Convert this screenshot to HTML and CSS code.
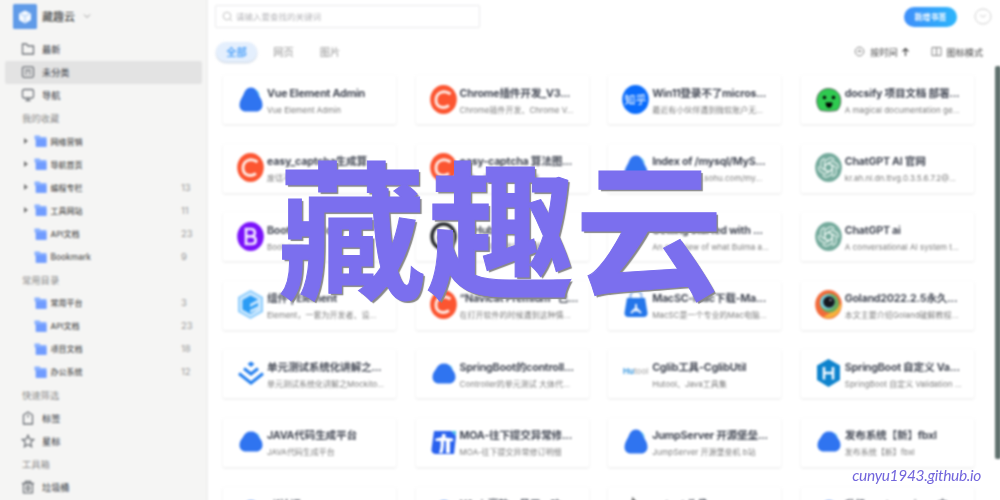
FILE: index.html
```html
<!DOCTYPE html>
<html lang="zh-CN">
<head>
<meta charset="utf-8">
<title>藏趣云</title>
<link rel="stylesheet" href="styles.css">
</head>
<body>
<svg class="defs" width="0" height="0">
  <symbol id="folder" viewBox="0 0 13 12"><path d="M.5 .5h5l1.200 1.600h5.800v9.700H1.600V5L.5 4z" fill="#8ab1ff"/><path d="M2 4.200h10.500v7.600H2z" fill="#709cff"/></symbol>
  <symbol id="drop" viewBox="0 0 28 30"><path d="M14 2.500c4 0 6 3 7.500 7 2 4 4 6 4 10.500 0 4-3 6.500-6 6.500H9c-4 0-6.500-2.500-6.500-6.500 0-4 2-6.500 4-10.500 1.500-4 3.500-7 7.500-7z" fill="#2f74f0"/><path d="M18.500 4.500c3 1 4 4 4.500 7z" fill="#5ac8f5"/></symbol>
  <symbol id="flat" viewBox="0 0 28 30"><path d="M14 4.500c4 0 6.500 2 8 5.500 2 3 3.500 4.500 3.500 8 0 4-3 6.500-6 6.500H9c-4 0-6.500-2.500-6.500-6.500 0-3.500 1.500-5 3.500-8 1.500-3.500 4-5.500 8-5.500z" fill="#2f74f0"/><path d="M19 5.500c2.500 1 3.500 3 4 5.500z" fill="#5ac8f5"/></symbol>
  <symbol id="csdn" viewBox="0 0 28 30"><ellipse cx="13.500" cy="14.500" rx="13.300" ry="14.500" fill="#fc5531"/><path d="M20.500 9C13.500 4 6 8 6 15c0 7 7 9.500 13 5.500" fill="none" stroke="#ffe9e2" stroke-width="2.900"/></symbol>
  <symbol id="gpt" viewBox="0 0 28 30"><ellipse cx="13.500" cy="14.500" rx="13.300" ry="14.500" fill="#74aa9c"/><g fill="none" stroke="#e5f3ee" stroke-width="1.200" transform="translate(-.5 -.5)"><path d="M14 11l4 2.300v8l-4 2.500c-2.500 1.500-5 .5-5.800-1.500"/><path d="M14 11l4 2.300v8l-4 2.500c-2.500 1.500-5 .5-5.800-1.500" transform="rotate(60 14 15)"/><path d="M14 11l4 2.300v8l-4 2.500c-2.500 1.500-5 .5-5.800-1.500" transform="rotate(120 14 15)"/><path d="M14 11l4 2.300v8l-4 2.500c-2.500 1.500-5 .5-5.800-1.500" transform="rotate(180 14 15)"/><path d="M14 11l4 2.300v8l-4 2.500c-2.500 1.500-5 .5-5.800-1.500" transform="rotate(240 14 15)"/><path d="M14 11l4 2.300v8l-4 2.500c-2.500 1.500-5 .5-5.800-1.500" transform="rotate(300 14 15)"/></g></symbol>
</svg>

<div class="app">
  <aside class="side">
    <header class="brand">
      <svg class="logo" viewBox="0 0 24 25"><rect width="24" height="25" rx="1.500" fill="#609be8"/><path d="M12 6.500l6 3v6.500L12 19.500 6 16V9.500z" fill="#f4f9ff"/><path d="M6.500 9.500l5.500 2.700 5.500-2.700M12 12.200V19" fill="none" stroke="#a9cbf6"/></svg>
      <span class="name">藏趣云</span>
      <svg class="chev" viewBox="0 0 8 6"><path d="M1 1.500l3 3 3-3" fill="none" stroke="#999"/></svg>
    </header>
    <div class="row main"><svg viewBox="0 0 14 14"><path d="M1.500 2h4l1.500 2h5.500v8h-11z"/></svg>最新</div>
    <div class="row main on"><svg viewBox="0 0 14 14"><rect x="1.500" y="1.800" width="11" height="10.500" rx="1.500"/><path d="M4 5.500h6M4 8.500h2M8 8.500h2"/></svg>未分类</div>
    <div class="row main"><svg viewBox="0 0 14 14"><rect x="1.500" y="1.500" width="11" height="8.500" rx="1.500"/><path d="M4.500 12.500h5M7 10v2"/></svg>导航</div>
    <div class="row label">我的收藏</div>
    <div class="row sub"><i class="tri"></i><svg><use href="#folder"/></svg>网络营销</div>
    <div class="row sub"><i class="tri"></i><svg><use href="#folder"/></svg>导航首页</div>
    <div class="row sub"><i class="tri"></i><svg><use href="#folder"/></svg>编程专栏<b>13</b></div>
    <div class="row sub"><i class="tri"></i><svg><use href="#folder"/></svg>工具网站<b>11</b></div>
    <div class="row sub"><i></i><svg><use href="#folder"/></svg>API文档<b>23</b></div>
    <div class="row sub"><i></i><svg><use href="#folder"/></svg><span class="latin">Bookmark</span><b>9</b></div>
    <div class="row label">常用目录</div>
    <div class="row sub"><i></i><svg><use href="#folder"/></svg>常用平台<b>3</b></div>
    <div class="row sub"><i></i><svg><use href="#folder"/></svg>API文档<b>23</b></div>
    <div class="row sub"><i></i><svg><use href="#folder"/></svg>项目文档<b>18</b></div>
    <div class="row sub"><i></i><svg><use href="#folder"/></svg>办公系统<b>12</b></div>
    <div class="row label">快速筛选</div>
    <div class="row main"><svg viewBox="0 0 14 14"><path d="M2.500 4L7 1l4.500 3v9h-9zM7 3.500v3"/></svg>标签</div>
    <div class="row main"><svg viewBox="0 0 14 14"><path d="M7 1.300l1.700 3.800 4 .4-3 2.800.9 4.300L7 10.500l-3.600 2.100.9-4.300-3-2.800 4-.4z"/></svg>星标</div>
    <div class="row label">工具箱</div>
    <div class="row main"><svg viewBox="0 0 14 14"><path d="M1 3.500h12M4.500 3.500v-2h5v2M2.500 3.500v9.300h9V3.500M5.500 6.500v3.500h3V6.500z"/></svg>垃圾桶</div>
  </aside>

  <main class="content">
    <div class="top">
      <div class="search"><svg viewBox="0 0 11 11"><circle cx="5" cy="5" r="3.800"/><path d="M8 8l2 2"/></svg>请输入要查找的关键词</div>
      <div class="add">新增书签</div>
      <svg class="avatar" viewBox="0 0 18 17"><ellipse cx="9" cy="8.500" rx="8" ry="7.500"/><path d="M6 7l3 2 3-2"/></svg>
    </div>
    <div class="bar">
      <span class="tab active">全部</span><span class="tab">网页</span><span class="tab">图片</span>
      <div class="tools">
        <svg viewBox="0 0 11 11"><circle cx="5.500" cy="5.500" r="4.300"/><path d="M3.500 5.500h4M5.500 3.500v2"/></svg><span>按时间</span>
        <svg class="arrow" viewBox="0 0 9 10"><path d="M4.500 9V1.500M1.500 4.500l3-3 3 3"/></svg>
        <svg viewBox="0 0 11 11"><path d="M1 1.500h9v8H1zM5.500 1.500v8"/></svg><span>图标模式</span>
      </div>
    </div>
    <div class="grid">
      <div class="card"><svg><use href="#drop"/></svg><div><h3>Vue Element Admin</h3><p>Vue Element Admin</p></div></div>
      <div class="card"><svg><use href="#csdn"/></svg><div><h3>Chrome插件开发_V3...</h3><p>Chrome插件开发、Chrome V...</p></div></div>
      <div class="card"><svg viewBox="0 0 28 30"><ellipse cx="13.500" cy="14.500" rx="13.300" ry="14.500" fill="#0b6cfb"/><text x="13.500" y="19" class="zhi">知乎</text></svg><div><h3>Win11登录不了micros...</h3><p>最近有小伙伴遇到微软账户无...</p></div></div>
      <div class="card"><svg viewBox="0 0 28 30"><path d="M5 25C-1 18 1 4 13.500 3.500 26.500 4 28.500 18 22.500 25c-2 1.500-15.500 1.500-17.500 0z" fill="#2fca50" stroke="#54645a"/><circle cx="9.500" cy="12.500" r="1.700"/><circle cx="18.500" cy="12.500" r="1.700"/><path d="M10.500 17.500h7c0 7-7 7-7 0z"/></svg><div><h3>docsify 项目文档 部署...</h3><p>A magical documentation ge...</p></div></div>

      <div class="card"><svg><use href="#csdn"/></svg><div><h3>easy_captcha生成算</h3><p>废话不多说直接上代码</p></div></div>
      <div class="card"><svg><use href="#csdn"/></svg><div><h3>easy-captcha 算法图...</h3><p>目的、验证码计算结果</p></div></div>
      <div class="card"><svg><use href="#drop"/></svg><div><h3>Index of /mysql/MyS...</h3><p>http://mirrors.sohu.com/my...</p></div></div>
      <div class="card"><svg><use href="#gpt"/></svg><div><h3>ChatGPT AI 官网</h3><p>kr.ah.nl.dn.ttvg.0.3.5.6.7.2@...</p></div></div>

      <div class="card"><svg viewBox="0 0 28 30"><ellipse cx="13.500" cy="14.500" rx="13.300" ry="14.500" fill="#7a12fa"/><path d="M9 7v15h5.500c5.500 0 5.500-7 .5-7.700 4-.8 4-7.300-1-7.300zM9 14.300h6" fill="none" stroke="#f0e5ff" stroke-width="2.700"/></svg><div><h3>Bootstrap Copy</h3><p>Bootstrap</p></div></div>
      <div class="card"><svg viewBox="0 0 28 30"><ellipse cx="13.500" cy="14.500" rx="11.500" ry="12.500" fill="#fff" stroke="#24272b" stroke-width="3.500"/><path d="M10 26c2-2 1-5 1-5-6-4-2-9-2-9l3 1h4l3-1s4 5-2 9v6" fill="#24272b"/></svg><div><h3>GitHub 排行榜</h3><p>GitHub 中文排行榜，帮...</p></div></div>
      <div class="card"><svg></svg><div><h3>Getting started with ...</h3><p>An overview of what Bulma a...</p></div></div>
      <div class="card"><svg><use href="#gpt"/></svg><div><h3>ChatGPT ai</h3><p>A conversational AI system t...</p></div></div>

      <div class="card"><svg viewBox="0 0 28 30"><path d="M13.500 0L26 7v15l-12.500 7L1 22V7z" fill="#8bccfd"/><path d="M13.500 2l10.700 6v13l-10.700 6-10.700-6V8z" fill="#c9e7fe"/><path d="M13.500 5.500l7.500 4-8 4.500v3l8-4v3l-8 4v3l7-3.500L13.500 24l-8-4.500V10z" fill="#2c9cf5"/></svg><div><h3>组件 | Element</h3><p>Element，一套为开发者、设...</p></div></div>
      <div class="card"><svg><use href="#csdn"/></svg><div><h3>“Navicat Premium” 已...</h3><p>在打开软件的时候遇到这种情...</p></div></div>
      <div class="card"><svg viewBox="0 0 28 30"><path d="M8.500 10V6q0-5 5.500-5t5.500 5v4" fill="none" stroke="#8fb4ea" stroke-width="2"/><path d="M5 8h18l2.500 15q0 4-4 4h-15q-4 0-4-4z" fill="#2476ea"/><path d="M14 14v4m0 0l-5 5m5-5l5 5M10.500 20.500h7" fill="none" stroke="#e8f2ff" stroke-width="2"/></svg><div><h3>MacSC-Mac下载-Ma...</h3><p>MacSC是一个专业的Mac电脑...</p></div></div>
      <div class="card"><svg viewBox="0 0 28 30"><ellipse cx="13.500" cy="14.500" rx="13.300" ry="14.500" fill="#f26a3a"/><path d="M8 27c9 4 19-3 18.500-14L20 20z" fill="#f6b13c"/><circle cx="14.500" cy="13" r="9.500" fill="#67ad5e"/><circle cx="12.500" cy="12" r="7.500" fill="#77c9d8"/><circle cx="14" cy="12" r="5.800" fill="#15181f"/><circle cx="15.500" cy="10" r="1" fill="#b9c7d9"/></svg><div><h3>Goland2022.2.5永久...</h3><p>本文主要介绍Goland破解教程...</p></div></div>

      <div class="card"><svg viewBox="0 0 28 30"><g fill="none" stroke="#2680ef" stroke-width="3"><path d="M2 14.500L14 24l12-9.500"/><path d="M7 9.500l7 5.500 7-5.500"/></g><path d="M14 2.500l3.500 2.500L14 8l-3.500-3z" fill="#2680ef"/></svg><div><h3>单元测试系统化讲解之...</h3><p>单元测试系统化讲解之Mockito...</p></div></div>
      <div class="card"><svg><use href="#flat"/></svg><div><h3>SpringBoot的controll...</h3><p>Controller的单元测试 大体代...</p></div></div>
      <div class="card"><svg viewBox="0 0 28 30"><text x="1" y="14.500" class="hu">Hu<tspan>tool</tspan></text></svg><div><h3>Cglib工具-CglibUtil</h3><p>Hutool、Java工具集</p></div></div>
      <div class="card"><svg viewBox="0 0 28 30"><path d="M13.500 0L25 6.500V21l-11.500 7L2 21V6.500z" fill="#0e83cd"/><path d="M9 8v12.500M18 8v12.500M9 14h9" stroke="#f2f9ff" stroke-width="2.600"/></svg><div><h3>SpringBoot 自定义 Va...</h3><p>SpringBoot 自定义 Validation ...</p></div></div>

      <div class="card"><svg><use href="#flat"/></svg><div><h3>JAVA代码生成平台</h3><p>JAVA代码生成平台</p></div></div>
      <div class="card"><svg viewBox="0 0 28 30"><path d="M4 4h17l5 5-2 18H5q-4-1-3.500-5z" fill="#2961ee"/><path d="M21 4l5 5V4z" fill="#4bc0e8"/><path d="M5 12l7-2V7h3.500v3.500l7.500 1v2.800h-3V26h-4V14h-2c0 5-.5 9-1.500 12H9c1.500-4 2-8 1.500-12H6z" fill="#fff"/></svg><div><h3>MOA-往下提交异常修...</h3><p>MOA-往下提交异常修订明细</p></div></div>
      <div class="card"><svg><use href="#drop"/></svg><div><h3>JumpServer 开源堡垒...</h3><p>JumpServer 开源堡垒机 b站</p></div></div>
      <div class="card"><svg><use href="#flat"/></svg><div><h3>发布系统【新】fbxl</h3><p>发布系统【新】fbxl</p></div></div>

      <div class="card"><svg><use href="#flat"/></svg><div><h3>xjf认证</h3></div></div>
      <div class="card"><svg><use href="#flat"/></svg><div><h3>YApi-高效、易用、功</h3></div></div>
      <div class="card"><svg viewBox="0 0 28 30"><path d="M3 10l7-2 1-5 4 5 8 3" fill="none" stroke="#666" stroke-width="2"/></svg><div><h3>potent 头像</h3></div></div>
      <div class="card"><svg><use href="#flat"/></svg><div><h3>升级 systems.json 中</h3></div></div>
    </div>
    <div class="thumb"></div>
  </main>
</div>
<div class="mark">藏趣云</div>
<div class="site">cunyu1943.github.io</div>
</body>
</html>
```

FILE: styles.css
```css
* { box-sizing: border-box; }
body { margin: 0; width: 1000px; height: 500px; overflow: hidden; position: relative; background: #fff; font-family: Inter, "Noto Sans CJK SC", sans-serif; }
.defs { position: absolute; }
.app { display: flex; width: 1008px; height: 508px; margin: -4px; filter: blur(.9px); overflow: hidden; }
.side { width: 212px; flex: none; padding: 4px 0 0 4px; background: #f5f5f4; border-right: 2px solid #f0f0ef; }
.brand { height: 37.5px; display: flex; align-items: center; padding: 0 0 5px 13px; }
.logo { width: 24px; height: 25px; }
.name { margin-left: 5px; font-size: 11px; font-weight: 500; color: #505050; }
.chev { width: 8px; height: 6px; margin-left: 8px; }
.row { height: 23.07px; display: flex; align-items: center; white-space: nowrap; }
.main { margin: 0 4px 0 5px; padding-left: 16px; font-size: 9.2px; font-weight: 500; color: #55595f; }
.main svg { width: 14px; height: 14px; margin-right: 7px; fill: none; stroke: #70747a; stroke-width: 1.3; }
.on { background: #e3e3e3; border-radius: 2px; }
.label { padding-left: 22px; font-size: 9.3px; color: #8c8c8c; }
.sub { padding-left: 22px; font-size: 8px; font-weight: 500; color: #555; }
.sub i { width: 12px; display: flex; }
.tri::before { content: ""; border: 3px solid transparent; border-left: 4px solid #777; margin-left: 1.5px; }
.sub svg { width: 13px; height: 12px; margin-right: 3.5px; }
.sub b { margin-left: auto; width: 25px; font-size: 9.5px; font-weight: 400; color: #999; }
.latin { font-size: 8.4px; font-weight: 500; }
.content { flex: 1; position: relative; padding: 4px 4px 0 0; }
.top { height: 36px; display: flex; align-items: center; padding: 0 8px 4px 7px; }
.search { width: 265px; height: 23px; border: 1px solid #e9e9eb; border-radius: 2px; display: flex; align-items: center; padding-left: 6px; font-size: 8.5px; color: #b5b5b9; }
.search svg { width: 11px; height: 11px; margin-right: 3px; fill: none; stroke: #c0c0c0; }
.add { margin-left: auto; width: 53px; height: 20px; margin-top: 1px; border-radius: 10px; background: linear-gradient(90deg, #3f8ffa, #2bb5fb); color: #fff; font-size: 8px; font-weight: 600; display: flex; align-items: center; justify-content: center; }
.avatar { width: 18px; height: 17px; margin-left: 17px; fill: none; stroke: #cfcfcf; }
.bar { height: 39px; display: flex; align-items: center; padding: 0 17px 8px 8px; font-size: 10.3px; color: #999; }
.tab { width: 41px; height: 20px; margin-right: 5.5px; display: flex; align-items: center; justify-content: center; }
.active { color: #55a5fa; font-weight: 600; background: #e4effd; border-radius: 10px; box-shadow: 0 1px 2px #c4cfde; margin-right: 6px; }
.tools { margin-left: auto; display: flex; align-items: center; font-size: 9.1px; font-weight: 500; color: #686868; }
.tools svg { width: 11px; height: 11px; margin-right: 5px; fill: none; stroke: #858585; }
.tools .arrow { width: 9px; height: 10px; margin: 0 21px 0 3px; stroke: #444; stroke-width: 1.2; }
.grid { display: grid; grid-template-columns: repeat(4, 173px); column-gap: 19.6px; grid-auto-rows: 49px; row-gap: 19.6px; padding: 3px 0 0 15px; margin-top: -3px; height: 432px; overflow: hidden; }
.card { display: flex; align-items: center; padding-left: 14px; border-radius: 2px; background: #fff; box-shadow: 0 1px 3px #00000018; }
.card svg { width: 28px; height: 30px; flex: none; margin-right: 2px; }
.card > div { height: 38px; white-space: nowrap; }
.card h3 { margin: 0; height: 24px; line-height: 26px; font-size: 10.7px; letter-spacing: -.25px; font-weight: 700; color: #464b57; }
.card p { margin: 0; height: 11px; line-height: 11px; font-size: 8px; color: #7c7c7c; }
.zhi { font-size: 11px; font-weight: 500; fill: #dcecff; text-anchor: middle; }
.hu { font-size: 8px; font-weight: 700; fill: #3a98df; }
.hu tspan { fill: #aaa; font-weight: 500; }
.thumb { position: absolute; right: 3px; top: 70px; width: 6px; height: 393px; background: #60716e; border-radius: 2px; }
.mark { position: absolute; left: 278px; top: 117px; font: 700 148px/212px "Noto Sans CJK SC", sans-serif; letter-spacing: .5px; color: #7b6fee; -webkit-text-stroke: 1px #7b6fee; text-shadow: 2px 2px 1px #888; white-space: nowrap; }
.site { position: absolute; right: 19px; top: 465px; font: italic 400 15.5px/20px Lato, sans-serif; letter-spacing: -.33px; color: #7265dc; }
```
